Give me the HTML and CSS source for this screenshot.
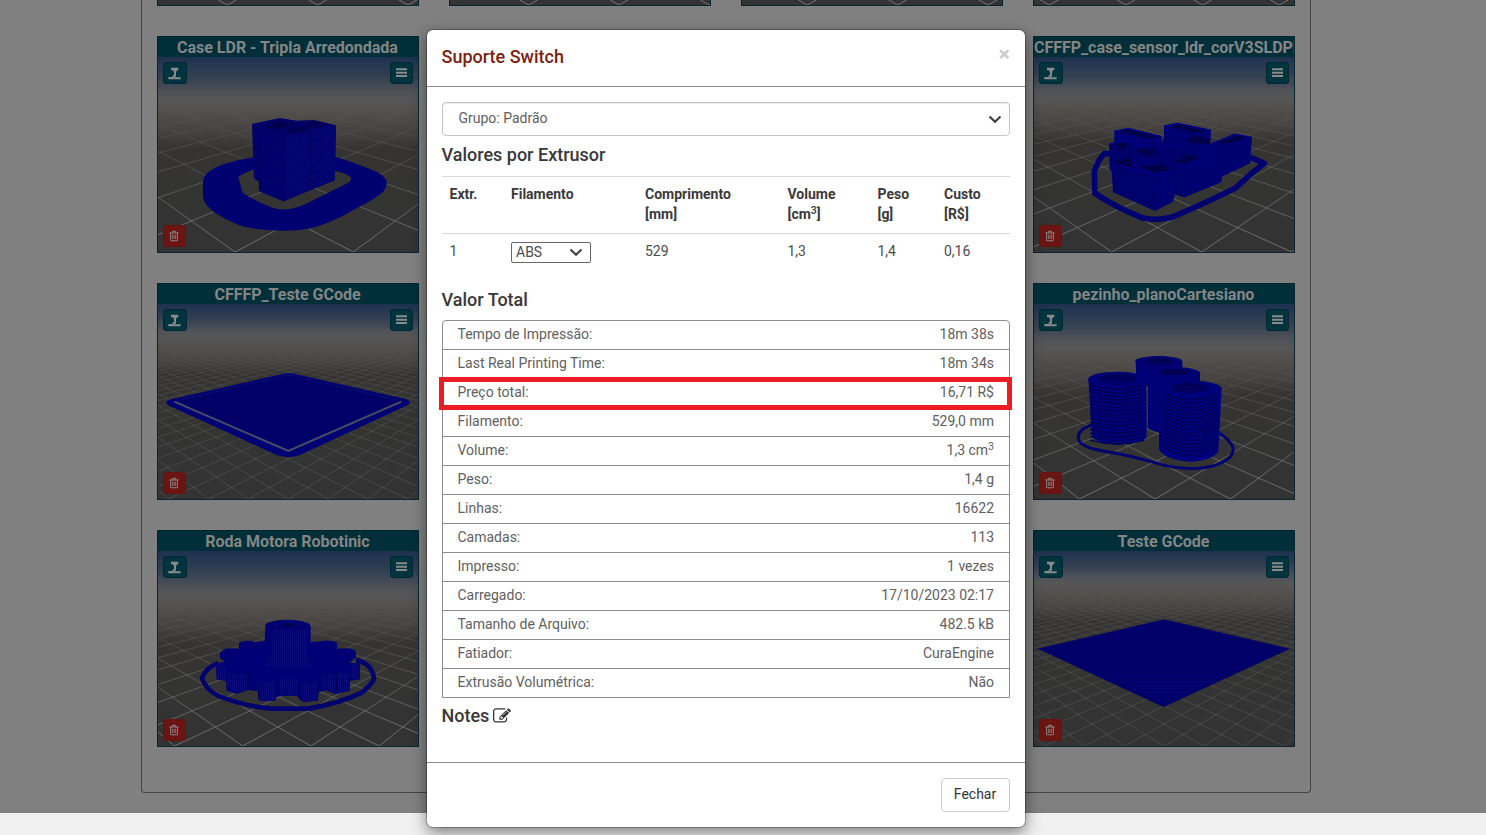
FILE: index.html
```html
<!DOCTYPE html>
<html lang="pt-BR">
<head>
<meta charset="utf-8">
<title>Suporte Switch</title>
<link rel="stylesheet" href="styles.css">
</head>
<body>
<svg class="defs" width="0" height="0">
  <defs>
    <symbol id="i-print" viewBox="0 0 39 39"><path d="M9 2h22v8h-4l-3 6v10h-6V16l-3-6H9zM14 25h9v5h-9zM1 30h13v-3h3v4h21v6H1z"/></symbol>
    <symbol id="i-menu" viewBox="0 0 33 30"><path d="M0 1h33v6H0zM0 11h33v6H0zM0 21h33v6H0z"/></symbol>
    <symbol id="i-trash" viewBox="0 0 1792 1792"><path d="M704 736v576q0 14-9 23t-23 9h-64q-14 0-23-9t-9-23v-576q0-14 9-23t23-9h64q14 0 23 9t9 23zm256 0v576q0 14-9 23t-23 9h-64q-14 0-23-9t-9-23v-576q0-14 9-23t23-9h64q14 0 23 9t9 23zm256 0v576q0 14-9 23t-23 9h-64q-14 0-23-9t-9-23v-576q0-14 9-23t23-9h64q14 0 23 9t9 23zm128 724v-948h-896v948q0 22 7 40.500t14.500 27 10.500 8.500h832q3 0 10.500-8.500t14.500-27 7-40.500zm-672-1076h448l-48-117q-7-9-17-11h-317q-10 2-17 11zm928 32v64q0 14-9 23t-23 9h-96v948q0 83-47 143.500t-113 60.500h-832q-66 0-113-58.500t-47-141.500v-952h-96q-14 0-23-9t-9-23v-64q0-14 9-23t23-9h309l70-167q15-37 54-63t79-26h320q40 0 79 26t54 63l70 167h309q14 0 23 9t9 23z"/></symbol>
    <symbol id="i-chevron" viewBox="0 0 14 9"><path d="M1.500 1.500L7 6.700l5.500-5.200" fill="none" stroke="#3c3c3c" stroke-width="2.100"/></symbol>
    <pattern id="hatch" width="9" height="9" patternUnits="userSpaceOnUse" patternTransform="rotate(28)"><rect width="9" height="9" fill="#050582"/><rect width="4" height="9" fill="#000058"/></pattern>
    <pattern id="fine" width="7" height="7" patternUnits="userSpaceOnUse" patternTransform="rotate(-35)"><rect width="7" height="7" fill="#000080"/><rect width="7" height="3" fill="#00005e"/></pattern>
    <pattern id="rings" width="12" height="8" patternUnits="userSpaceOnUse"><rect width="12" height="8" fill="#000080"/><rect width="12" height="3" fill="#00005e"/></pattern>
    <pattern id="dots" width="6" height="5" patternUnits="userSpaceOnUse"><rect width="6" height="5" fill="#00006e"/><rect width="3" height="3" fill="#101082"/></pattern>
  </defs>
</svg>

<main class="page">
  <div class="panel">
    <div class="cut" data-cut></div><div class="cut" data-cut></div><div class="cut" data-cut></div><div class="cut" data-cut></div>

    <article class="card left">
      <h3 class="name">Case LDR - Tripla Arredondada</h3>
      <div class="scene">
        <svg class="view" viewBox="54 171 780 585" data-step="355" data-origin="285" data-fog="45" data-dark="92">
          <path fill="#000070" fill-rule="evenodd" d="M340 472Q240 488 203 518Q188 532 189 552V592Q194 616 225 638Q290 680 345 686Q440 698 505 686Q570 672 640 630Q700 600 730 575Q742 560 740 545Q735 528 705 513Q650 490 585 470ZM341 508L585 512Q620 520 633 532Q635 542 622 550L505 608Q475 624 440 628Q405 630 385 618Q340 600 308 578L295 532Q300 524 341 508Z"/>
          <path fill="#000066" d="M336 372L420 354L470 362L522 360L588 376L584 541L430 604L358 574V545L342 536Z"/>
          <path fill="url(#hatch)" d="M432 408L588 376L584 541L430 604Z"/>
          <path fill="url(#hatch)" opacity=".5" d="M338 376L432 408L430 604L358 574V545L342 536Z"/>
          <path fill="#000050" d="M372 382L420 363L462 376L405 390ZM440 386L515 374L545 378L450 402ZM500 368L522 364L560 374L520 372Z"/>
          <path stroke="#000050" stroke-width="3" fill="none" d="M431 410V602M358 400V570M516 392V560"/>
        </svg>
      </div>
    </article>

    <article class="card right">
      <h3 class="name clipped">CFFFP_case_sensor_ldr_corV3SLDPRT</h3>
      <div class="scene">
        <svg class="view" viewBox="57 171 780 585" data-step="270" data-origin="290" data-fog="42" data-dark="85">
          <path fill="none" stroke="#00006f" stroke-width="17" stroke-linejoin="round" d="M290 462L268 460Q250 480 238 514L240 580Q300 620 380 653Q430 663 470 652Q560 615 660 565L710 520L748 490L706 472"/>
          <path fill="#000078" d="M298 394L340 385L440 408V460H298Z"/>
          <path fill="url(#fine)" d="M447 376L488 369L588 390L586 432L660 401L711 410L706 490L620 530L618 546L508 592L480 582L474 605L420 632L294 576L290 514L284 510L282 432L330 420L440 430L447 410Z"/>
          <path fill="#00006b" d="M294 490L414 526L420 632L294 576ZM284 432L330 424L440 452L436 488L360 468L290 490ZM440 440L528 458L508 500L508 592L480 582L472 515L440 495Z"/>
          <path fill="#00004a" d="M300 482L345 472L352 505L302 490ZM370 500L440 492L466 514L416 520ZM296 432L335 426V455ZM360 450L418 440L438 455L390 466ZM474 484L528 462L560 475L508 498ZM460 380L487 373L575 392L545 400ZM310 396L340 388L432 410L405 418ZM600 430L660 406L700 412L650 430ZM510 425L540 404L582 418V434Z"/>
          <path fill="url(#fine)" d="M414 526L474 513V605L420 632ZM508 496L620 455V546L508 592Z"/>
          <path fill="none" stroke="#000092" stroke-width="3" d="M298 394L340 385L440 410M447 378L488 370L586 390M586 432L660 402L710 412M284 432L330 422L438 455M294 490L414 524L472 513M480 486L508 496L568 470"/>
        </svg>
      </div>
    </article>

    <article class="card left">
      <h3 class="name">CFFFP_Teste GCode</h3>
      <div class="scene">
        <svg class="view" viewBox="54 102 780 585" data-step="120" data-origin="445" data-fog="34" data-dark="70">
          <path fill="#000074" d="M430 311Q445 307 462 311L800 388Q818 397 802 406L480 555Q445 568 410 555L85 406Q70 397 88 389Z"/>
          <path fill="#000068" d="M445 316L776 394L445 536L112 394Z"/>
          <path fill="none" stroke="#4c4c60" stroke-width="6" d="M103 395L445 543L784 395"/>
          <path fill="none" stroke="#15155f" stroke-width="2" d="M120 390L445 315L770 390"/>
        </svg>
      </div>
    </article>

    <article class="card right">
      <h3 class="name">pezinho_planoCartesiano</h3>
      <div class="scene">
        <svg class="view" viewBox="57 102 780 585" data-step="227" data-origin="420" data-fog="45" data-dark="92">
          <path fill="none" stroke="#00006f" stroke-width="9" d="M232 464Q180 482 192 512Q202 532 260 542Q350 556 440 584Q530 606 600 586Q660 566 654 532Q645 510 612 488"/>
          <path fill="url(#rings)" d="M362 272Q430 245 502 272V300L555 312V480Q430 500 399 475V350L364 320Z"/>
          <ellipse cx="431" cy="273" rx="70" ry="15" fill="#000070"/><ellipse cx="431" cy="273" rx="42" ry="8" fill="#000052"/>
          <ellipse cx="477" cy="311" rx="79" ry="20" fill="#000076"/><ellipse cx="477" cy="306" rx="46" ry="10" fill="#000052"/>
          <g class="curves" data-x="220" data-w="174" data-top="335" data-bottom="515" data-dip="22">
            <path fill="#00007c" d="M220 327L394 327L395 502Q380 522 305 524Q240 518 231 498Z"/>
          </g>
          <ellipse cx="307" cy="327" rx="87" ry="22" fill="#000076"/><ellipse cx="307" cy="326" rx="56" ry="14" fill="#000058"/>
          <path fill="none" stroke="#00008a" stroke-width="2" d="M262 330Q305 345 352 328M275 322Q305 332 340 320"/>
          <g class="curves" data-x="434" data-w="180" data-top="365" data-bottom="545" data-dip="50">
            <path fill="#00007e" d="M432 356H620L610 545Q590 572 522 575Q450 570 432 538Z"/>
          </g>
          <ellipse cx="526" cy="356" rx="94" ry="24" fill="#000078"/><ellipse cx="524" cy="353" rx="56" ry="15" fill="#000054"/>
          <path fill="none" stroke="#00008c" stroke-width="2" d="M480 354Q524 372 566 354M490 347Q524 360 558 346"/>
        </svg>
      </div>
    </article>

    <article class="card left">
      <h3 class="name">Roda Motora Robotinic</h3>
      <div class="scene">
        <svg class="view" viewBox="54 93 780 585" data-step="205" data-origin="308" data-fog="47" data-dark="92">
          <path fill="none" stroke="#00006f" stroke-width="14" d="M235 430Q200 440 186 474Q195 508 240 530Q330 563 400 566H505Q600 550 665 518Q700 490 702 474Q695 430 648 420"/>
          <path fill="#000074" d="M240 398Q255 384 270 385L297 386V368Q320 358 345 366L374 364L376 320Q380 300 445 299Q505 302 512 320V366L545 364Q570 358 591 368V386L620 385Q645 388 648 395V412L628 428L660 430V478L630 482V512L588 522L560 510L536 516L534 542L490 546L470 528Q440 525 410 530L406 542L360 544L354 514L325 510L290 521L260 512L258 482L230 478L228 430L255 425L240 415Z"/>
          <path fill="url(#dots)" d="M398 330H500V400L515 440H375L395 400ZM228 432L258 440V482L230 478ZM260 466L325 462V510L290 521L260 512ZM356 492L408 484V540L360 544ZM418 478H472V524H418ZM480 490L534 486V540L490 546ZM545 465L628 460V512L588 522L545 508ZM632 436L660 434V478L632 480Z"/>
          <ellipse cx="443" cy="316" rx="67" ry="15" fill="#000070"/>
          <ellipse cx="445" cy="315" rx="20" ry="5" fill="#00004f"/>
          <path fill="none" stroke="#000055" stroke-width="3" d="M325 462V508M356 490V540M408 484V535M480 490V542M534 484V520M545 465V508M590 458V518"/>
        </svg>
      </div>
    </article>

    <article class="card right">
      <h3 class="name">Teste GCode</h3>
      <div class="scene">
        <svg class="view" viewBox="57 93 780 585" data-step="120" data-origin="448" data-fog="34" data-dark="70">
          <path fill="#000068" d="M448 298L825 386L446 561L68 386Z"/>
          <path stroke="#08087c" stroke-width="2" d="M280 470H620M310 484H605M335 495H570M360 506H540M382 517H520M400 528H500M420 540H475"/>
        </svg>
      </div>
    </article>
  </div>
</main>

<section class="modal">
  <header class="modal-header">
    <h4 class="title">Suporte Switch</h4>
    <span class="close">×</span>
  </header>
  <div class="modal-body">
    <div class="group"><span>Grupo: Padrão</span><svg class="chev" width="14" height="9"><use href="#i-chevron"/></svg></div>
    <h4 class="heading">Valores por Extrusor</h4>
    <table class="extruders">
      <colgroup><col class="c1"><col class="c2"><col class="c3"><col class="c4"><col class="c5"><col class="c6"></colgroup>
      <tr><th>Extr.</th><th>Filamento</th><th>Comprimento<br>[mm]</th><th>Volume<br>[cm<sup>3</sup>]</th><th>Peso<br>[g]</th><th>Custo<br>[R$]</th></tr>
      <tr><td>1</td><td><div class="mini"><span>ABS</span><svg width="14" height="9"><use href="#i-chevron"/></svg></div></td><td>529</td><td>1,3</td><td>1,4</td><td>0,16</td></tr>
    </table>
    <h4 class="heading total">Valor Total</h4>
    <ul class="list">
      <li><span>Tempo de Impressão:</span><span>18m 38s</span></li>
      <li><span>Last Real Printing Time:</span><span>18m 34s</span></li>
      <li class="marked"><span>Preço total:</span><span>16,71 R$</span></li>
      <li><span>Filamento:</span><span>529,0 mm</span></li>
      <li><span>Volume:</span><span>1,3 cm<sup>3</sup></span></li>
      <li><span>Peso:</span><span>1,4 g</span></li>
      <li><span>Linhas:</span><span>16622</span></li>
      <li><span>Camadas:</span><span>113</span></li>
      <li><span>Impresso:</span><span>1 vezes</span></li>
      <li><span>Carregado:</span><span>17/10/2023 02:17</span></li>
      <li><span>Tamanho de Arquivo:</span><span>482.5 kB</span></li>
      <li><span>Fatiador:</span><span>CuraEngine</span></li>
      <li><span>Extrusão Volumétrica:</span><span>Não</span></li>
    </ul>
    <h4 class="heading notes">Notes <svg width="18" height="18" viewBox="0 0 1792 1792"><path d="M888 1184l116-116-152-152-116 116v56h96v96h56zm440-720q-16-16-33 1l-350 350q-17 17-1 33t33-1l350-350q17-17 1-33zm80 594v190q0 119-84.500 203.500t-203.500 84.500h-832q-119 0-203.500-84.500t-84.500-203.500v-832q0-119 84.500-203.500t203.500-84.500h832q63 0 117 25 15 7 18 23 3 17-9 29l-49 49q-14 14-32 8-23-6-45-6h-832q-66 0-113 47t-47 113v832q0 66 47 113t113 47h832q66 0 113-47t47-113v-126q0-13 9-22l64-64q15-15 35-7t20 29zm-96-738l288 288-672 672h-288v-288zm444 132l-92 92-288-288 92-92q28-28 68-28t68 28l152 152q28 28 28 68t-28 68z"/></svg></h4>
  </div>
  <footer class="modal-footer"><button class="btn">Fechar</button></footer>
</section>
<script src="scene.js"></script>
</body>
</html>
```

FILE: styles.css
```css
* { box-sizing: border-box; }
html, body { margin: 0; height: 835px; overflow: hidden; }
body {
  background: #f0f0f0;
  font: 14px/20px Roboto, "Liberation Sans", sans-serif;
  color: #606062;
}
.defs { position: absolute; }
h3, h4 { margin: 0; font-weight: 500; }

.page { height: 813px; background: #808080; }
.panel {
  width: 1170px;
  height: 793px;
  margin-left: 141px;
  padding: 0 15px;
  border: 1px solid #424648;
  border-top: 0;
  border-radius: 0 0 4px 4px;
  display: grid;
  grid-template-columns: repeat(4, 262px);
  grid-template-rows: 6px repeat(3, 217px);
  gap: 30px;
}
.left { grid-column: 1; }
.right { grid-column: 4; }
.cut { background: #333; border: 1px solid #00272f; border-top: 0; overflow: hidden; }
.cut svg { display: block; }

.card { border: 1px solid #00272f; background: #002f3a; overflow: hidden; }
.name {
  height: 20px;
  padding-right: 1px;
  font-size: 16px;
  line-height: 22px;
  font-weight: 700;
  letter-spacing: -.02px;
  text-align: center;
  white-space: nowrap;
  overflow: hidden;
  color: #858585;
}
.clipped { padding: 0; text-align: left; }
.scene { position: relative; height: 195px; }
.view { display: block; width: 260px; height: 195px; }
.tool {
  position: absolute;
  top: 5px;
  display: flex;
  align-items: center;
  justify-content: center;
  width: 24px;
  height: 22px;
  background: #00343f;
  border: 1px solid #002830;
  border-radius: 3px;
  fill: #8a8a8a;
}
.tool.print { left: 5px; padding-right: 1px; }
.tool.menu { right: 5px; width: 23px; }
.tool.trash { left: 5px; top: auto; bottom: 5px; width: 23px; padding-right: 1px; background: #6b1512; border-color: #651310; }

.modal {
  position: absolute;
  left: 427px;
  top: 30px;
  width: 598px;
  height: 797px;
  background: #fff;
  border-radius: 6px;
  box-shadow: 0 0 0 1px rgba(0, 0, 0, .25), 0 5px 15px rgba(0, 0, 0, .5);
  display: flex;
  flex-direction: column;
}
.modal-header {
  height: 57px;
  padding: 15px 15px 15px 14.5px;
  display: flex;
  justify-content: space-between;
  border-bottom: 1px solid #8c8c8c;
}
.title { font-size: 18px; line-height: 24px; color: #7c2110; }
.close { font-size: 21px; font-weight: 700; line-height: 18px; color: #ccc; }
.modal-body { padding: 15px; flex: 1; }
.group {
  height: 34px;
  padding: 0 7px 2px 15.5px;
  display: flex;
  align-items: center;
  justify-content: space-between;
  border: 1px solid #c4c4c4;
  border-radius: 4px;
  box-shadow: inset 0 1px 1px rgba(0, 0, 0, .075);
}
.chev { margin-top: 3px; }
.heading { margin: 9px 0 0 -.5px; font-size: 18px; line-height: 20px; color: #383838; }

.extruders {
  width: 568px;
  margin-top: 11px;
  border-collapse: separate;
  border-spacing: 0;
  table-layout: fixed;
}
.extruders th, .extruders td {
  padding: 7px 0 0 8px;
  border-top: 1px solid #d8d8d8;
  text-align: left;
  vertical-align: top;
}
.extruders th:first-child, .extruders td:first-child { padding-left: 7.5px; }
.extruders th { height: 57px; font-weight: 700; color: #3a3a3a; }
.extruders td { height: 36px; color: #4c4c4c; }
.c1 { width: 61px; } .c2 { width: 134px; } .c3 { width: 142.5px; } .c4 { width: 90px; } .c5 { width: 66.5px; }
sup { font-size: 75%; line-height: 0; vertical-align: baseline; position: relative; top: -.5em; }
th sup { font-weight: 500; }
.mini {
  width: 80px;
  height: 21px;
  margin-top: 1px;
  padding: 0 7px 1px 4px;
  display: flex;
  align-items: center;
  justify-content: space-between;
  border: 1px solid #666;
  border-radius: 2px;
}
.total { margin-top: 21px; }

.list {
  height: 378px;
  margin: 10px 0 0;
  padding: 0;
  list-style: none;
  border: 1px solid #8c8c8c;
  border-radius: 4px 4px 0 0;
}
.list li {
  position: relative;
  height: 29px;
  padding: 3px 15px 0 14.5px;
  display: flex;
  justify-content: space-between;
  border-bottom: 1px solid #8c8c8c;
}
.list li:last-child { border-bottom: 0; }
.marked::after {
  content: "";
  position: absolute;
  box-sizing: border-box;
  left: -4px;
  right: -3px;
  top: -2px;
  height: 33px;
  border: 5px solid #ec1c24;
  z-index: 1;
}
.notes { margin-top: 8px; display: flex; align-items: center; gap: 4px; }
.notes svg { fill: #333; }

.modal-footer {
  height: 65px;
  padding: 15px;
  display: flex;
  justify-content: flex-end;
  border-top: 1px solid #8c8c8c;
}
.btn {
  width: 69px;
  height: 34px;
  padding: 0 1px 2px 0;
  font: inherit;
  color: #333;
  background: #fff;
  border: 1px solid #ccc;
  border-radius: 4px;
}
```

FILE: scene.js
```js
// Draws the foggy sky, the perspective floor grid and the card buttons.
const backdrop = (id, x, y, step, origin, fog, dark) => {
  const bottom = y + 585, horizon = y - 85, at = p => (p / 195).toFixed(3);
  const stops = [[0, '#1d3150'], [fog * .45, '#344052'], [fog * .8, '#505359'], [fog, '#575656'],
    [fog + 8, '#54504c'], [(fog + dark) / 2 + 6, '#454240'], [dark, '#353433'], [195, '#333333']];
  let out = `<defs><linearGradient id="sky${id}" x1="0" x2="0" y1="0" y2="1">` +
    stops.map(([p, c]) => `<stop offset="${at(p)}" stop-color="${c}"/>`).join('') +
    `</linearGradient><linearGradient id="fade${id}" gradientUnits="userSpaceOnUse" x1="0" x2="0" y1="${y}" y2="${bottom}">` +
    `<stop offset="${at(fog + 6)}" stop-color="#777" stop-opacity="0"/><stop offset="${at(dark)}" stop-color="#777" stop-opacity=".3"/>` +
    `<stop offset="1" stop-color="#7c7c7c" stop-opacity="${step < 150 ? .45 : .85}"/></linearGradient></defs>` +
    `<rect x="${x}" y="${y}" width="780" height="585" fill="url(#sky${id})"/>`;
  let d = '';
  for (let k = -40; k <= 40; k++) {
    const foot = origin + k * step;
    for (const vx of [x + 390 - 1100, x + 390 + 1100]) {
      const t = (y + 60 - horizon) / (bottom - horizon);
      d += `M${(vx + (foot - vx) * t).toFixed(1)} ${y + 60}L${foot} ${bottom}`;
    }
  }
  return out + `<path d="${d}" fill="none" stroke="url(#fade${id})" stroke-width="${step < 150 ? 2 : 3}"/>`;
};

// Layer lines that sag around the front of a cylinder.
document.querySelectorAll('.curves').forEach(g => {
  const { x, w, top, bottom, dip } = g.dataset;
  let d = '';
  for (let y = +top; y + dip / 2 < +bottom + 12; y += 11) d += `M${+x + 6} ${y}q${w / 2 - 6} ${dip} ${w - 12} 0`;
  g.insertAdjacentHTML('beforeend', `<path d="${d}" fill="none" stroke="#000050" stroke-width="4"/>`);
});

document.querySelectorAll('.view').forEach((svg, i) => {
  const [x, y] = svg.getAttribute('viewBox').split(' ').map(Number);
  const { step, origin, fog, dark } = svg.dataset;
  svg.insertAdjacentHTML('afterbegin', backdrop(i, x, y, +step, +origin, +fog, +dark));
  svg.parentElement.insertAdjacentHTML('beforeend',
    '<span class="tool print"><svg width="13" height="13"><use href="#i-print"/></svg></span>' +
    '<span class="tool menu"><svg width="11" height="10"><use href="#i-menu"/></svg></span>' +
    '<span class="tool trash"><svg width="12" height="12"><use href="#i-trash"/></svg></span>');
});

document.querySelectorAll('[data-cut]').forEach((el, i) => {
  const origin = [262, 290, 250, 330][i];
  let d = '';
  for (let k = -3; k < 6; k++) {
    const x = (origin - 54 + k * (i === 3 ? 230 : 271)) / 3;
    d += `M${x - 9} 0L${x} 5L${x + 9} 0`;
  }
  el.innerHTML = `<svg width="260" height="5"><path d="${d}" fill="none" stroke="#777"/></svg>`;
});
```
